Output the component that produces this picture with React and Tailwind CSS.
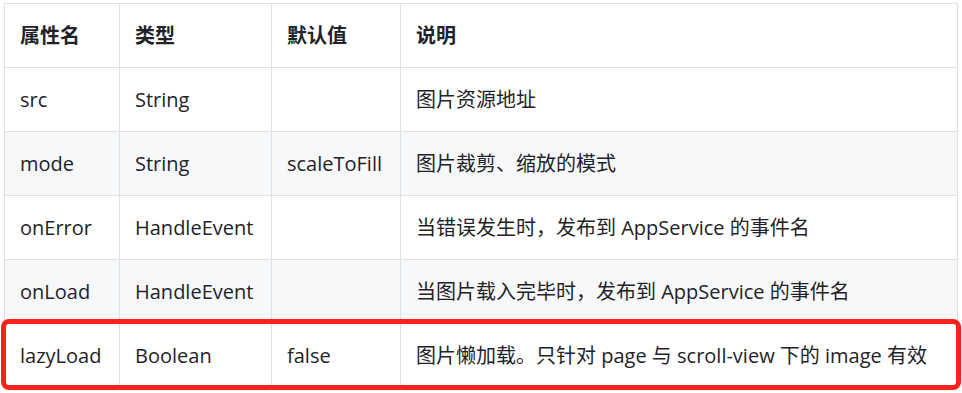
import React from 'react';

const ROWS = [
  ['src', 'String', '', '图片资源地址'],
  ['mode', 'String', 'scaleToFill', '图片裁剪、缩放的模式'],
  ['onError', 'HandleEvent', '', '当错误发生时，发布到 AppService 的事件名'],
  ['onLoad', 'HandleEvent', '', '当图片载入完毕时，发布到 AppService 的事件名'],
  ['lazyLoad', 'Boolean', 'false', '图片懒加载。只针对 page 与 scroll-view 下的 image 有效'],
];

const cell = 'border border-[#dfe2e5] px-[15px] h-[64px] align-middle';

export default function App() {
  return (
    <div
      className="relative w-[962px] h-[393px] bg-white pl-[4px] pt-[3px] text-[#1f2328] text-[20px] leading-none"
      style={{ fontFamily: '"Open Sans", "Noto Sans CJK SC", sans-serif' }}
    >
      <table className="border-collapse table-fixed w-[953px]">
        <colgroup>
          <col className="w-[115px]" />
          <col className="w-[152px]" />
          <col className="w-[129px]" />
          <col className="w-[557px]" />
        </colgroup>
        <thead>
          <tr>
            {['属性名', '类型', '默认值', '说明'].map((h) => (
              <th key={h} className={`${cell} text-left font-bold`}>{h}</th>
            ))}
          </tr>
        </thead>
        <tbody>
          {ROWS.map((row, i) => (
            <tr key={row[0]} className={i % 2 === 1 ? 'bg-[#f6f8fa]' : 'bg-white'}>
              {row.map((v, j) => (
                <td key={j} className={`${cell} whitespace-nowrap`}>{v}</td>
              ))}
            </tr>
          ))}
        </tbody>
      </table>

      {/* highlight box over the last row */}
      <div className="absolute left-[1px] top-[319px] w-[960px] h-[71px] rounded-[8px] shadow-[inset_0_0_0_5px_#f7231c] pointer-events-none" />
    </div>
  );
}
